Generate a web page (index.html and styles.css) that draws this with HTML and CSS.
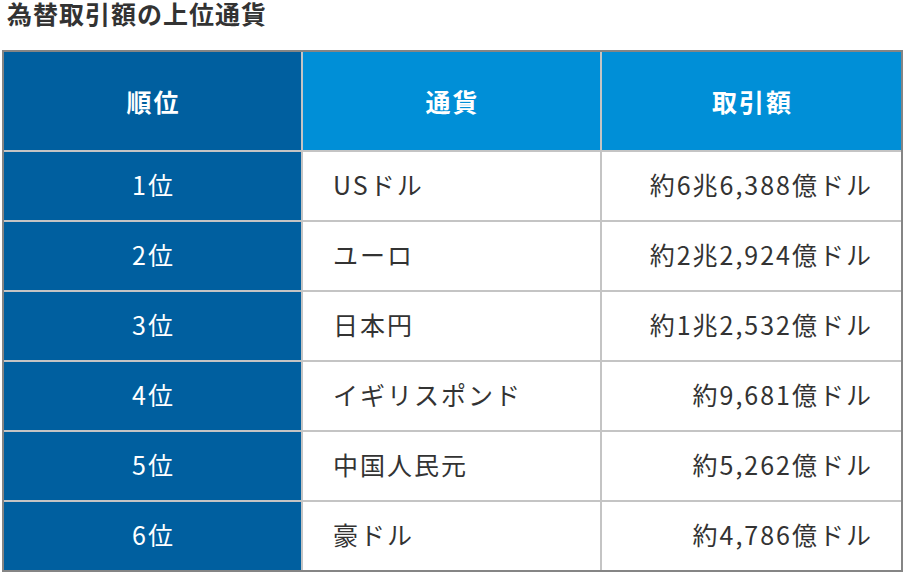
FILE: index.html
```html
<!DOCTYPE html>
<html lang="ja">
<head>
<meta charset="utf-8">
<title>為替取引額の上位通貨</title>
<link rel="stylesheet" href="styles.css">
</head>
<body>
<div class="page">
  <h1 class="title">為替取引額の上位通貨</h1>
  <table class="rank">
    <colgroup><col class="c"><col class="c"><col class="c"></colgroup>
    <thead>
      <tr>
        <th class="h-rank">順位</th>
        <th class="h-main">通貨</th>
        <th class="h-main last">取引額</th>
      </tr>
    </thead>
    <tbody>
      <tr><td class="rk">1位</td><td class="cur">USドル</td><td class="amt last">約6兆6,388億ドル</td></tr>
      <tr><td class="rk">2位</td><td class="cur">ユーロ</td><td class="amt last">約2兆2,924億ドル</td></tr>
      <tr><td class="rk">3位</td><td class="cur">日本円</td><td class="amt last">約1兆2,532億ドル</td></tr>
      <tr><td class="rk">4位</td><td class="cur">イギリスポンド</td><td class="amt last">約9,681億ドル</td></tr>
      <tr><td class="rk">5位</td><td class="cur">中国人民元</td><td class="amt last">約5,262億ドル</td></tr>
      <tr class="end"><td class="rk">6位</td><td class="cur">豪ドル</td><td class="amt last">約4,786億ドル</td></tr>
    </tbody>
  </table>
</div>
</body>
</html>
```
FILE: styles.css
```css
html, body {
  margin: 0;
  padding: 0;
  background: #ffffff;
}
body {
  font-family: "Noto Sans CJK JP", "Noto Sans", sans-serif;
  color: #333333;
}
.page {
  padding-left: 2px;
}
.title {
  margin: 0 0 24px 5px;
  height: 26px;
  font-size: 25px;
  line-height: 26px;
  letter-spacing: 1px;
  font-weight: 700;
  color: #333333;
}
.rank {
  width: 901px;
  border-collapse: separate;
  border-spacing: 0;
  border: 2px solid #858585;
  table-layout: fixed;
}
.c {
  width: 299px;
}
.rank th,
.rank td {
  padding: 0;
  border-right: 2px solid #c4c4c4;
  border-bottom: 2px solid #c4c4c4;
  font-size: 25px;
  letter-spacing: 2px;
}
.rank .last {
  border-right: none;
}
.rank .end td {
  border-bottom: none;
}
.rank th {
  height: 98px;
  color: #ffffff;
  font-weight: 700;
  text-align: center;
  padding-left: 2px;
}
.h-rank {
  background: #005f9f;
}
.h-main {
  background: #008fd7;
}
.rank td {
  height: 64px;
  padding-bottom: 4px;
  font-weight: 400;
}
.rk {
  background: #005f9f;
  color: #ffffff;
  text-align: center;
}
.rank .rk {
  padding-left: 2px;
}
.rank .cur {
  text-align: left;
  padding-left: 30px;
  color: #333333;
}
.rank .amt {
  text-align: right;
  padding-right: 28px;
  color: #333333;
}
```
